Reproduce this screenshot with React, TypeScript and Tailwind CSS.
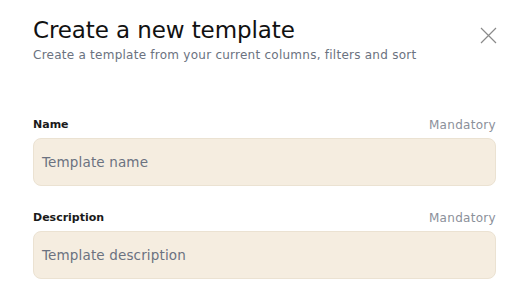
import React from "react";

export default function App() {
  return (
    <div className="w-[529px] h-[307px] bg-white overflow-hidden" style={{ fontFamily: '"DejaVu Sans", sans-serif' }}>
      <div className="flex items-start justify-between pl-[33px] pr-[32px] pt-[14px]">
        <div className="flex flex-col">
          <h1 className="text-[23px] leading-[32px] text-[#111111] tracking-[-0.1px]">Create a new template</h1>
          <p className="text-[12px] leading-[16px] text-[#6b7280] mt-[1px] tracking-[0.25px]">Create a template from your current columns, filters and sort</p>
        </div>
        <button className="mt-[13px] w-[17px] h-[17px] flex items-center justify-center text-[#8a8a8a]">
          <svg width="17" height="17" viewBox="0 0 17 17" fill="none" stroke="currentColor" strokeWidth="1.2">
            <path d="M1 1 L16 16 M16 1 L1 16" />
          </svg>
        </button>
      </div>
      <div className="flex flex-col gap-[24px] px-[33px] pt-[54px]">
        <Field label="Name" placeholder="Template name" />
        <Field label="Description" placeholder="Template description" />
      </div>
    </div>
  );
}

function Field({ label, placeholder }: { label: string; placeholder: string }) {
  return (
    <div className="flex flex-col">
      <div className="flex items-center justify-between h-[16px] mb-[5px]">
        <span className="text-[11px] font-bold text-[#1a1a1a]">{label}</span>
        <span className="text-[12px] text-[#8b909a] tracking-[0.3px]">Mandatory</span>
      </div>
      <div className="h-[48px] rounded-[8px] border border-[#ebe2d2] bg-[#f5ede0] flex items-center px-[8px]">
        <span className="text-[13.5px] text-[#6b7280] tracking-[0.15px]">{placeholder}</span>
      </div>
    </div>
  );
}
